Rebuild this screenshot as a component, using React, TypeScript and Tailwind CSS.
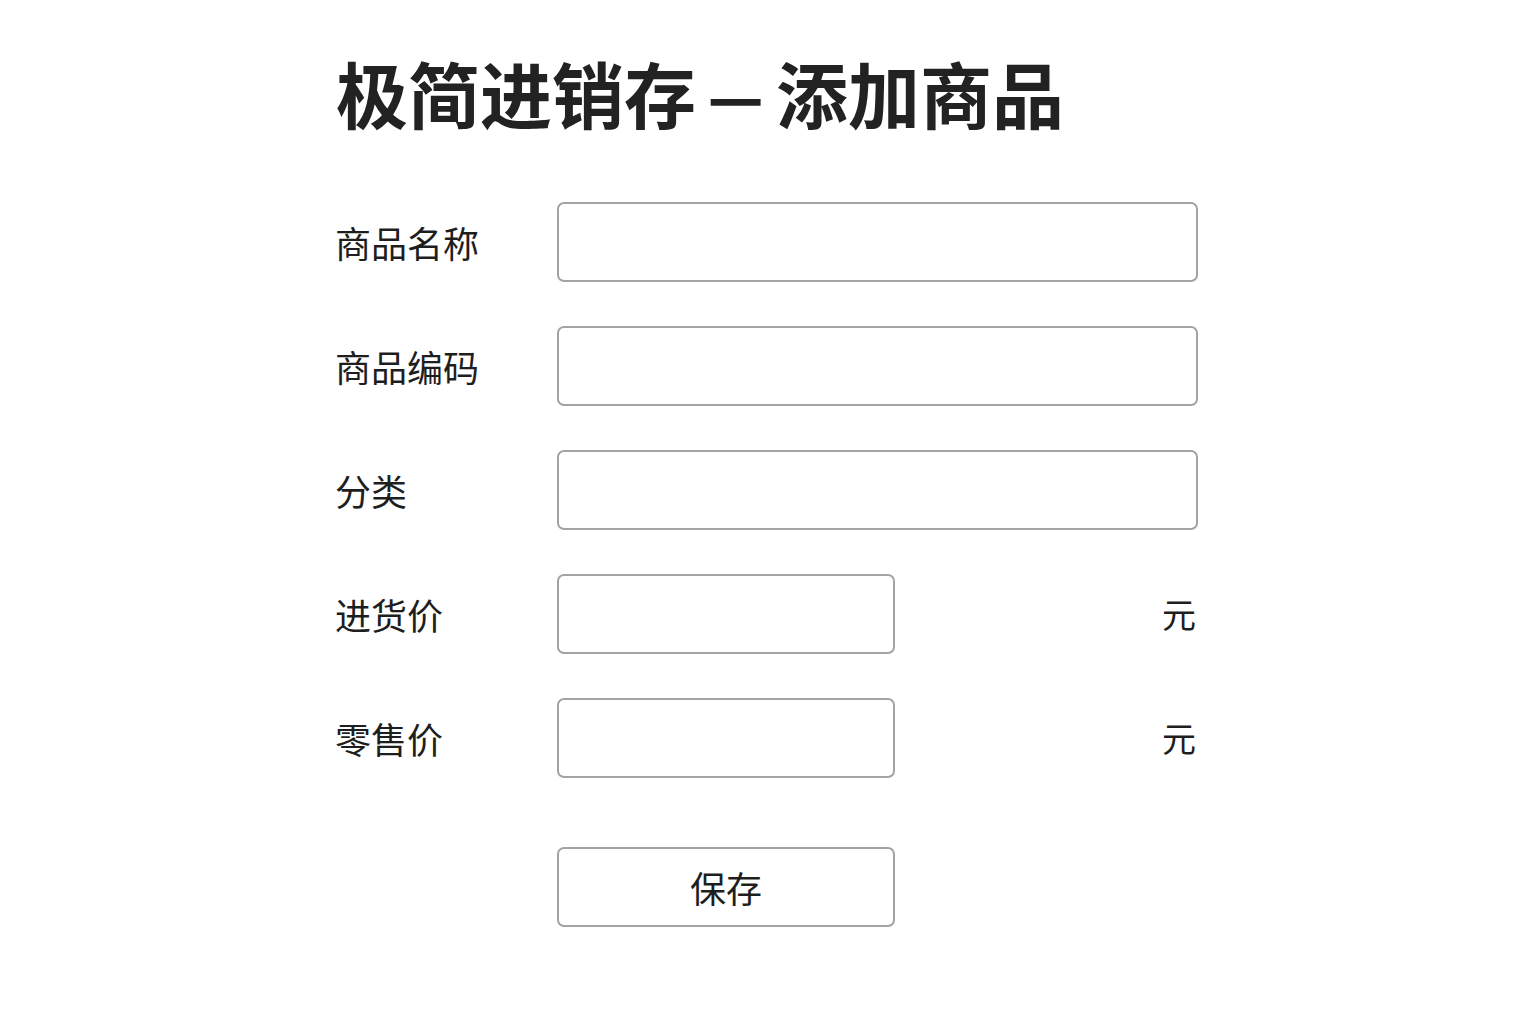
const font = { fontFamily: '"Noto Sans CJK SC", "Noto Sans", sans-serif' };

function Field({ label, short }: { label: string; short?: boolean }) {
  return (
    <div className="flex items-center h-[80px]">
      <label className="w-[221px] shrink-0 -ml-[1px] text-[36px] leading-none text-[#1e1e1e]">{label}</label>
      {short ? (
        <>
          <input className="ml-[1px] w-[338px] h-[80px] rounded-[7px] border-2 border-[#a3a3a3] bg-white outline-none" />
          <div className="flex-1" />
          <span className="text-[34px] leading-none text-[#1e1e1e] pr-[2px]">元</span>
        </>
      ) : (
        <input className="ml-[1px] w-[641px] h-[80px] rounded-[7px] border-2 border-[#a3a3a3] bg-white outline-none" />
      )}
    </div>
  );
}

export default function App() {
  return (
    <div className="min-h-screen w-full bg-white" style={font}>
      <div className="w-[862px] ml-[336px] pt-[56px]">
        <h1 className="text-[72px] leading-none font-bold text-[#222]">
          极简进销存
          <span className="inline-block w-[80px] text-center">
            <span className="inline-block scale-x-[1.55]">–</span>
          </span>
          添加商品
        </h1>
        <div className="mt-[74px] flex flex-col gap-[44px]">
          <Field label="商品名称" />
          <Field label="商品编码" />
          <Field label="分类" />
          <Field label="进货价" short />
          <Field label="零售价" short />
        </div>
        <div className="mt-[69px] pl-[221px]">
          <button className="w-[338px] h-[80px] rounded-[7px] border-2 border-[#a3a3a3] bg-white text-[36px] leading-none text-[#1e1e1e]">
            保存
          </button>
        </div>
      </div>
    </div>
  );
}
